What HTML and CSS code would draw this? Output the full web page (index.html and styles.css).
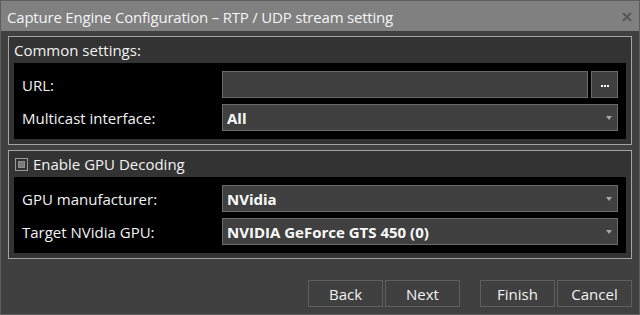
FILE: index.html
```html
<!DOCTYPE html>
<html>
<head>
<meta charset="utf-8">
<link rel="stylesheet" href="styles.css">
</head>
<body>
<div class="window">
  <div class="titlebar">
    <span class="title">Capture Engine Configuration – RTP / UDP stream setting</span>
    <svg class="close" width="10" height="10" viewBox="0 0 10 10"><path d="M1 1L9 9M9 1L1 9" stroke="#555" stroke-width="1.8"/></svg>
  </div>
  <div class="content">
    <div class="group">
      <div class="group-header">Common settings:</div>
      <div class="panel">
        <div class="row">
          <div class="label">URL:</div>
          <div class="control split">
            <div class="input"></div>
            <div class="browse"><span class="dots"><i></i><i></i><i></i></span></div>
          </div>
        </div>
        <div class="row">
          <div class="label">Multicast interface:</div>
          <div class="control combo"><span class="value">All</span><span class="arrow"></span></div>
        </div>
      </div>
    </div>
    <div class="group">
      <div class="group-header check-header"><span class="checkbox"><span class="mark"></span></span>Enable GPU Decoding</div>
      <div class="panel">
        <div class="row">
          <div class="label">GPU manufacturer:</div>
          <div class="control combo"><span class="value">NVidia</span><span class="arrow"></span></div>
        </div>
        <div class="row">
          <div class="label">Target NVidia GPU:</div>
          <div class="control combo"><span class="value">NVIDIA GeForce GTS 450 (0)</span><span class="arrow"></span></div>
        </div>
      </div>
    </div>
  </div>
  <div class="footer">
    <div class="btn-pair">
      <div class="btn">Back</div>
      <div class="btn">Next</div>
    </div>
    <div class="btn-pair">
      <div class="btn">Finish</div>
      <div class="btn">Cancel</div>
    </div>
  </div>
</div>
</body>
</html>
```
FILE: styles.css
```css
html, body {
  margin: 0;
  padding: 0;
  background: #404040;
}
body {
  font-family: "Open Sans", "Noto Sans", sans-serif;
  font-size: 15px;
  color: #f2f2f2;
}
.window {
  box-sizing: border-box;
  width: 640px;
  height: 315px;
  border: 1px solid #5e5e5e;
  background: #404040;
  display: flex;
  flex-direction: column;
}
.titlebar {
  height: 30px;
  background: #808080;
  display: flex;
  align-items: center;
  justify-content: space-between;
  padding: 0 7px 0 6px;
}
.title {
  color: #f4f4f4;
  font-size: 15px;
  letter-spacing: -0.2px;
  position: relative;
  top: 1px;
}
.close {
  display: block;
  margin-top: 2px;
}
.content {
  padding: 5px 7px 0 7px;
  display: flex;
  flex-direction: column;
  gap: 5px;
}
.group {
  border: 1px solid #a3a3a3;
  background: #333333;
  padding: 0 5px 5px 5px;
}
.group-header {
  height: 26px;
  line-height: 26px;
  font-size: 15px;
}
.check-header {
  display: flex;
  align-items: center;
  gap: 5px;
  padding-left: 1px;
}
.checkbox {
  box-sizing: border-box;
  width: 13px;
  height: 13px;
  border: 1px solid #9a9a9a;
  background: #333;
  display: flex;
  align-items: center;
  justify-content: center;
  margin-top: 1px;
}
.mark {
  width: 7px;
  height: 7px;
  background: #7c7c7c;
  border: 1px solid #8e8e8e;
  box-sizing: border-box;
}
.panel {
  background: #000;
  padding: 8px;
  display: flex;
  flex-direction: column;
  gap: 6px;
}
.row {
  display: flex;
  align-items: center;
  height: 27px;
}
.label {
  width: 200px;
  flex: none;
  font-size: 15px;
}
.control {
  flex: 1;
  height: 27px;
  box-sizing: border-box;
}
.split {
  display: flex;
  gap: 3px;
}
.input {
  flex: 1;
  background: #404040;
  border: 1px solid #6a6a6a;
}
.browse {
  width: 27px;
  flex: none;
  box-sizing: border-box;
  background: #404040;
  border: 1px solid #6a6a6a;
  display: flex;
  align-items: center;
  justify-content: center;
}
.dots {
  display: flex;
  gap: 1px;
  margin-top: 3px;
}
.dots i {
  display: block;
  width: 2px;
  height: 2px;
  background: #fff;
}
.combo {
  background: #404040;
  border: 1px solid #6a6a6a;
  display: flex;
  align-items: center;
  justify-content: space-between;
  padding: 0 5px 0 4px;
}
.value {
  font-weight: bold;
  font-size: 15px;
  color: #fafafa;
}
.arrow {
  width: 0;
  height: 0;
  border-left: 3px solid transparent;
  border-right: 3px solid transparent;
  border-top: 4px solid #a8a8a8;
  margin-top: 1px;
}
.footer {
  margin-top: auto;
  display: flex;
  justify-content: flex-end;
  gap: 20px;
  padding: 0 7px 7px 0;
}
.btn-pair {
  display: flex;
  gap: 2px;
}
.btn {
  box-sizing: border-box;
  width: 75px;
  height: 27px;
  border: 1px solid #5f5f5f;
  display: flex;
  align-items: center;
  justify-content: center;
  font-size: 15px;
  color: #f2f2f2;
}
```
